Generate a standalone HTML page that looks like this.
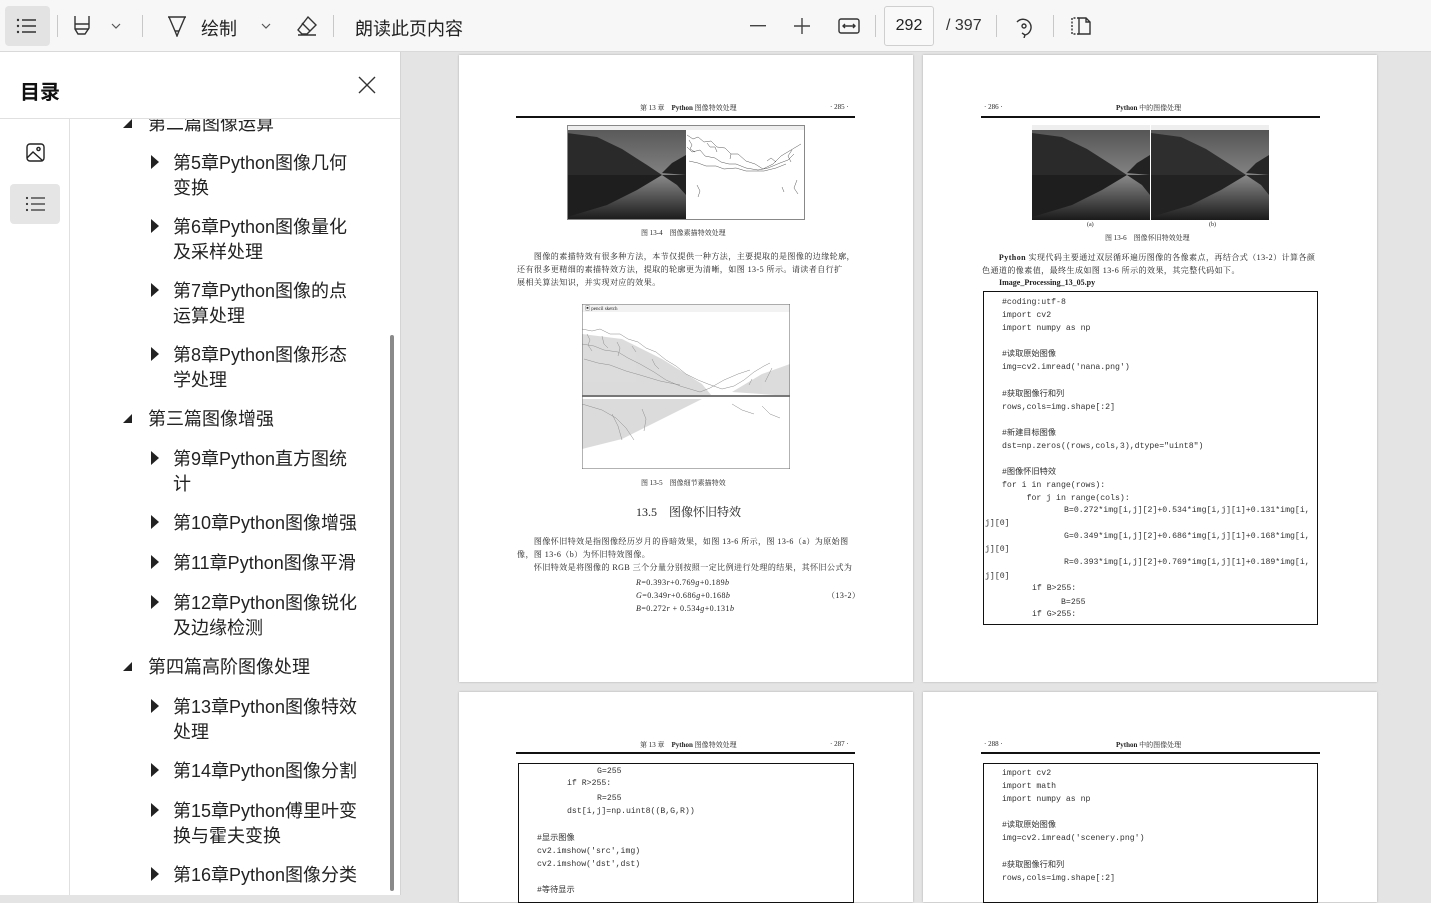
<!DOCTYPE html>
<html><head><meta charset="utf-8">
<style>
*{margin:0;padding:0;box-sizing:border-box}
body{width:1431px;height:895px;overflow:hidden;background:#e4e4e4;font-family:"Liberation Sans","Noto Sans CJK SC",sans-serif;position:relative}
.a{position:absolute;white-space:nowrap}
#tb{position:absolute;left:0;top:0;width:1431px;height:52px;background:#f7f7f7;border-bottom:1px solid #d9d9d9}
.sep{position:absolute;top:15px;width:1px;height:22px;background:#c8c8c8}
#sb{position:absolute;left:0;top:52px;width:401px;height:843px;background:#fff;border-right:1px solid #d4d4d4}
.toc{position:absolute;font-size:18px;color:#222;line-height:25px;font-family:"Liberation Sans","Noto Sans CJK SC",sans-serif}
.tri{position:absolute;width:0;height:0;border-top:7px solid transparent;border-bottom:7px solid transparent;border-left:8px solid #222}
.dtri{position:absolute;width:0;height:0;border-left:9px solid transparent;border-bottom:9px solid #222}
.pg{position:absolute;background:#fff;box-shadow:0 0 2px rgba(0,0,0,.25)}
.s{font-family:"Liberation Serif","Noto Serif CJK SC",serif;color:#222;position:absolute;white-space:nowrap}
.p{font-size:8px;letter-spacing:.45px;line-height:13px}
.m{font-family:"Liberation Mono","Noto Sans CJK SC",monospace;font-size:8.2px;color:#333;position:absolute;white-space:nowrap}
.box{position:absolute;border:1.3px solid #111}
</style></head><body>

<!-- toolbar -->
<div id="tb">
<div class="a" style="left:5px;top:6px;width:45px;height:40px;background:#e3e3e3;border-radius:4px"></div>
<svg class="a" style="left:16px;top:17px" width="22" height="18" viewBox="0 0 22 18"><g fill="#333"><circle cx="2" cy="3" r="1.2"/><circle cx="2" cy="9" r="1.2"/><circle cx="2" cy="15" r="1.2"/></g><g stroke="#333" stroke-width="1.4"><path d="M6 3h14M6 9h14M6 15h14"/></g></svg>
<div class="sep" style="left:57px"></div>
<svg class="a" style="left:72px;top:15px" width="20" height="22" viewBox="0 0 20 22" fill="none" stroke="#333" stroke-width="1.4"><path d="M3 1v8h14V1M3 9v5l3 5h7l4-6V9M3 14h14"/></svg>
<svg class="a" style="left:110px;top:22px" width="12" height="8" viewBox="0 0 12 8" fill="none" stroke="#555" stroke-width="1.2"><path d="M2 2l4 4 4-4"/></svg>
<div class="sep" style="left:142px"></div>
<svg class="a" style="left:166px;top:15px" width="22" height="22" viewBox="0 0 22 22" fill="none" stroke="#333" stroke-width="1.4"><path d="M2 2h18M3 2l6 14h4l6-14M9 16l2 5 2-5"/></svg>
<div class="a" style="left:201px;top:15px;font-size:18px;color:#222">绘制</div>
<svg class="a" style="left:260px;top:22px" width="12" height="8" viewBox="0 0 12 8" fill="none" stroke="#555" stroke-width="1.2"><path d="M2 2l4 4 4-4"/></svg>
<svg class="a" style="left:295px;top:15px" width="24" height="22" viewBox="0 0 24 22" fill="none" stroke="#333" stroke-width="1.4"><path d="M13 2l8 8-9 9H7l-4-4z M7 8l8 8 M3 20h18"/></svg>
<div class="sep" style="left:333px"></div>
<div class="a" style="left:355px;top:15px;font-size:18px;color:#222">朗读此页内容</div>
<svg class="a" style="left:750px;top:25px" width="16" height="2"><rect width="16" height="1.4" fill="#444"/></svg>
<svg class="a" style="left:794px;top:18px" width="16" height="16" viewBox="0 0 16 16" stroke="#444" stroke-width="1.4"><path d="M8 0v16M0 8h16"/></svg>
<svg class="a" style="left:838px;top:17px" width="22" height="18" viewBox="0 0 22 18" fill="none" stroke="#333" stroke-width="1.4"><rect x="1" y="2" width="20" height="14" rx="2"/><path d="M5 9h12M7 7l-2 2 2 2M15 7l2 2-2 2"/></svg>
<div class="sep" style="left:875px"></div>
<div class="a" style="left:884px;top:6px;width:50px;height:40px;border:1px solid #cfcfcf;border-radius:3px;background:#f9f9f9;font-size:16px;color:#222;text-align:center;line-height:38px">292</div>
<div class="a" style="left:946px;top:17px;font-size:16px;color:#333">/ 397</div>
<div class="sep" style="left:996px"></div>
<svg class="a" style="left:1012px;top:14px" width="24" height="24" viewBox="0 0 24 24" fill="none" stroke="#333" stroke-width="1.4"><path d="M5 8a8 8 0 1 1 8 13M13 21l-3-2M13 21l-1 3"/><circle cx="12" cy="12" r="2"/></svg>
<div class="sep" style="left:1053px"></div>
<svg class="a" style="left:1070px;top:17px" width="22" height="18" viewBox="0 0 22 18" fill="none" stroke="#333" stroke-width="1.4"><path d="M9 1H2v16h7" stroke-dasharray="2 1.5"/><path d="M9 1h7l4 4v12H9z M16 1v4h4"/></svg>
</div>

<!-- sidebar -->
<div id="sb">
<div class="a" style="left:20px;top:24px;font-size:20px;font-weight:bold;color:#111">目录</div>
<svg class="a" style="left:358px;top:24px" width="18" height="18" viewBox="0 0 18 18" stroke="#333" stroke-width="1.4"><path d="M1 1l16 16M17 1L1 17"/></svg>
<div class="a" style="left:0;top:66px;width:400px;height:1px;background:#e0e0e0"></div>
<div class="a" style="left:69px;top:67px;width:1px;height:776px;background:#e0e0e0"></div>
<svg class="a" style="left:26px;top:91px" width="19" height="19" viewBox="0 0 19 19" fill="none" stroke="#222" stroke-width="1.4"><rect x="1" y="1" width="17" height="17" rx="3"/><circle cx="12.5" cy="6" r="1.6"/><path d="M1 15l6-6 10 9"/></svg>
<div class="a" style="left:10px;top:132px;width:50px;height:40px;background:#e5e5e5;border-radius:4px"></div>
<svg class="a" style="left:25px;top:143px" width="22" height="18" viewBox="0 0 22 18"><g fill="#333"><circle cx="2" cy="3" r="1.1"/><circle cx="2" cy="9" r="1.1"/><circle cx="2" cy="15" r="1.1"/></g><g stroke="#333" stroke-width="1.3"><path d="M6 3h14M6 9h14M6 15h14"/></g></svg>
<div class="a" style="left:70px;top:67px;width:320px;height:776px;overflow:hidden">
 <div style="position:absolute;left:-70px;top:-117px;width:400px;height:900px">
  <div class="dtri" style="left:123px;top:117px"></div><div class="toc" style="left:148px;top:110px">第二篇图像运算</div>
  <div class="tri" style="left:151px;top:153px"></div><div class="toc" style="left:173px;top:149px">第5章Python图像几何<br>变换</div>
  <div class="tri" style="left:151px;top:217px"></div><div class="toc" style="left:173px;top:213px">第6章Python图像量化<br>及采样处理</div>
  <div class="tri" style="left:151px;top:281px"></div><div class="toc" style="left:173px;top:277px">第7章Python图像的点<br>运算处理</div>
  <div class="tri" style="left:151px;top:345px"></div><div class="toc" style="left:173px;top:341px">第8章Python图像形态<br>学处理</div>
  <div class="dtri" style="left:123px;top:412px"></div><div class="toc" style="left:148px;top:405px">第三篇图像增强</div>
  <div class="tri" style="left:151px;top:449px"></div><div class="toc" style="left:173px;top:445px">第9章Python直方图统<br>计</div>
  <div class="tri" style="left:151px;top:513px"></div><div class="toc" style="left:173px;top:509px">第10章Python图像增强</div>
  <div class="tri" style="left:151px;top:553px"></div><div class="toc" style="left:173px;top:549px">第11章Python图像平滑</div>
  <div class="tri" style="left:151px;top:593px"></div><div class="toc" style="left:173px;top:589px">第12章Python图像锐化<br>及边缘检测</div>
  <div class="dtri" style="left:123px;top:660px"></div><div class="toc" style="left:148px;top:653px">第四篇高阶图像处理</div>
  <div class="tri" style="left:151px;top:697px"></div><div class="toc" style="left:173px;top:693px">第13章Python图像特效<br>处理</div>
  <div class="tri" style="left:151px;top:761px"></div><div class="toc" style="left:173px;top:757px">第14章Python图像分割</div>
  <div class="tri" style="left:151px;top:801px"></div><div class="toc" style="left:173px;top:797px">第15章Python傅里叶变<br>换与霍夫变换</div>
  <div class="tri" style="left:151px;top:865px"></div><div class="toc" style="left:173px;top:861px">第16章Python图像分类</div>
 </div>
</div>
<div class="a" style="left:390px;top:283px;width:4px;height:556px;background:#8a8a8a;border-radius:2px"></div>
</div>

<!-- page 1 -->
<div class="pg" style="left:459px;top:55px;width:454px;height:627px"></div>
<div class="s" style="left:640px;top:103px;font-size:7px">第 13 章　<b>Python</b> 图像特效处理</div>
<div class="s" style="left:830px;top:103px;font-size:7px">· 285 ·</div>
<div class="a" style="left:516px;top:116px;width:339px;height:1.5px;background:#111"></div>
<svg class="a" style="left:567px;top:125px" width="238" height="95" viewBox="0 0 238 95">
<defs><linearGradient id="g1" x1="0" y1="0" x2="0" y2="1"><stop offset="0" stop-color="#555"/><stop offset="1" stop-color="#aaa"/></linearGradient>
<linearGradient id="w1" x1="0" y1="0" x2="0" y2="1"><stop offset="0" stop-color="#8a8a8a"/><stop offset="1" stop-color="#1a1a1a"/></linearGradient></defs>
<rect width="119" height="95" fill="url(#g1)"/><rect y="0" width="119" height="5" fill="#eee"/>
<rect y="50" width="119" height="45" fill="url(#w1)"/>
<polygon points="0,8 30,12 55,24 80,40 95,50 0,50" fill="#2a2a2a"/>
<polygon points="119,30 105,38 95,48 119,50" fill="#222"/>
<polygon points="0,50 95,50 70,65 40,80 0,92" fill="#1e1e1e"/>
<polygon points="119,50 95,50 110,60 119,70" fill="#222"/>
<rect x="119" width="119" height="95" fill="#fff"/><rect x="119" width="119" height="5" fill="#eee"/>
<g fill="none" stroke="#555" stroke-width=".5">
<path d="M120,10 l6,4 l5,-2 l6,5 l7,-1 l6,6 l8,1 l6,6 l7,0 l8,7 l9,3 l8,5 l10,-5 l8,-8 l10,-6 l10,-6"/>
<path d="M120,22 l5,5 l8,-2 l5,6 l10,2 l6,4 l8,2 l7,0 l10,4 l12,2 l10,-2 l12,-5 l8,-3 l6,-6"/>
<path d="M122,36 l9,2 l8,3 l10,0 l8,3 l12,-1 l10,3 l18,0 l12,-3 l10,-4"/>
<path d="M122,15 l3,5 l-2,4 l5,3 M140,18 l3,4 l5,0 l2,5 M160,25 l4,4 l-1,5 M200,36 l4,-3 l5,4 M225,25 l-4,6 l3,6 M130,60 l3,6 l-2,6 M230,55 l-3,8 l4,6 M215,62 l2,5"/>
</g></svg>
<div class="a" style="left:567px;top:125px;width:238px;height:95px;border:1px solid #888"></div>
<div class="s" style="left:641px;top:228px;font-size:7px">图 13-4　图像素描特效处理</div>
<div class="s p" style="left:517px;top:250px">　　图像的素描特效有很多种方法，本节仅提供一种方法，主要提取的是图像的边缘轮廓，<br>还有很多更精细的素描特效方法，提取的轮廓更为清晰，如图 13-5 所示。请读者自行扩<br>展相关算法知识，并实现对应的效果。</div>
<svg class="a" style="left:582px;top:304px" width="208" height="165" viewBox="0 0 208 165">
<rect width="208" height="165" fill="#fff"/><rect width="208" height="8" fill="#f2f2f2"/>
<g fill="none" stroke="#888" stroke-width=".5">
<path d="M0,25 l10,2 l8,-2 l10,5 l10,0 l8,5 l10,3 l8,6 l10,4 l10,8 l10,6 l10,8 l12,6 l10,4 l14,5 l12,-3 l10,-6 l10,-8 l10,-6 l6,-3"/>
<path d="M0,40 l12,2 l10,4 l14,2 l10,6 l12,6 l14,8 l12,8 l14,6 l20,6 l10,-4 l14,-8 l14,-6 l12,-4"/>
<path d="M2,55 l14,4 l12,2 l16,6 l14,4 l20,6 l20,4"/>
<path d="M0,100 l20,6 l14,8 l10,10 l8,12 M30,110 l6,12 l4,14 M60,105 l4,10 l-2,12 M150,100 l10,6 l12,4 M180,102 l8,8 l10,4"/>
<path d="M5,30 l3,6 l-2,5 l4,6 M20,32 l2,8 l4,4 M35,38 l3,6 l-2,8 M50,42 l4,6 M70,55 l3,6 l4,4 M190,64 l-4,8 l-3,6 M170,75 l-3,6"/>
</g>
<g fill="#9a9a9a" opacity=".35"><polygon points="0,30 40,35 80,55 120,80 130,92 0,92"/><polygon points="208,60 180,70 150,88 208,92"/><polygon points="0,95 120,95 80,115 40,135 0,145"/></g>
<rect y="91" width="208" height="2" fill="#777"/>
<rect width="208" height="165" fill="none" stroke="#666" stroke-width="1"/>
</svg>
<div class="s" style="left:585px;top:305px;font-size:5px">▣ pencil sketch</div>
<div class="s" style="left:641px;top:478px;font-size:7px">图 13-5　图像细节素描特效</div>
<div class="s" style="left:636px;top:503px;font-size:12px">13.5　图像怀旧特效</div>
<div class="s p" style="left:517px;top:535px">　　图像怀旧特效是指图像经历岁月的昏暗效果，如图 13-6 所示，图 13-6（a）为原始图<br>像，图 13-6（b）为怀旧特效图像。<br>　　怀旧特效是将图像的 RGB 三个分量分别按照一定比例进行处理的结果，其怀旧公式为</div>
<div class="s p" style="left:636px;top:576px"><i>R</i>=0.393<i>r</i>+0.769<i>g</i>+0.189<i>b</i><br><i>G</i>=0.349<i>r</i>+0.686<i>g</i>+0.168<i>b</i><br><i>B</i>=0.272<i>r</i> + 0.534<i>g</i>+0.131<i>b</i></div>
<div class="s p" style="left:827px;top:589px">（13-2）</div>

<!-- page 2 -->
<div class="pg" style="left:923px;top:55px;width:454px;height:627px"></div>
<div class="s" style="left:984px;top:103px;font-size:7px">· 286 ·</div>
<div class="s" style="left:1116px;top:103px;font-size:7px"><b>Python</b> 中的图像处理</div>
<div class="a" style="left:981px;top:116px;width:339px;height:1.5px;background:#111"></div>
<svg class="a" style="left:1032px;top:125px" width="237" height="95" viewBox="0 0 237 95">
<defs><linearGradient id="g2" x1="0" y1="0" x2="0" y2="1"><stop offset="0" stop-color="#505050"/><stop offset="1" stop-color="#b0b0b0"/></linearGradient>
<linearGradient id="w2" x1="0" y1="0" x2="0" y2="1"><stop offset="0" stop-color="#8a8a8a"/><stop offset="1" stop-color="#1a1a1a"/></linearGradient></defs>
<g id="l2"><rect width="118" height="95" fill="url(#g2)"/><rect width="118" height="5" fill="#eee"/>
<rect y="50" width="118" height="45" fill="url(#w2)"/>
<polygon points="0,8 30,12 55,24 80,40 95,50 0,50" fill="#2a2a2a"/>
<polygon points="118,30 105,38 95,48 118,50" fill="#222"/>
<polygon points="0,50 95,50 70,65 40,80 0,92" fill="#1e1e1e"/>
<polygon points="118,50 95,50 110,60 118,70" fill="#222"/></g>
<g transform="translate(119,0)"><rect width="118" height="95" fill="url(#g2)"/><rect width="118" height="5" fill="#eee"/>
<rect y="50" width="118" height="45" fill="url(#w2)"/>
<polygon points="0,8 30,12 55,24 80,40 95,50 0,50" fill="#2e2e2e"/>
<polygon points="118,30 105,38 95,48 118,50" fill="#262626"/>
<polygon points="0,50 95,50 70,65 40,80 0,92" fill="#222"/>
<polygon points="118,50 95,50 110,60 118,70" fill="#262626"/></g>
</svg>
<div class="s" style="left:1087px;top:222px;font-size:6px">(a)</div>
<div class="s" style="left:1209px;top:222px;font-size:6px">(b)</div>
<div class="s" style="left:1105px;top:233px;font-size:7px">图 13-6　图像怀旧特效处理</div>
<div class="s p" style="left:982px;top:251px">　　<b>Python</b> 实现代码主要通过双层循环遍历图像的各像素点，再结合式（13-2）计算各颜<br>色通道的像素值，最终生成如图 13-6 所示的效果，其完整代码如下。</div>
<div class="s" style="left:999px;top:278px;font-size:8px;font-weight:bold">Image_Processing_13_05.py</div>
<div class="box" style="left:983px;top:291px;width:335px;height:334px"></div>
<div class="m" style="left:1002px;top:296px;line-height:13.1px">#coding:utf-8<br>import cv2<br>import numpy as np<br><br>#读取原始图像<br>img=cv2.imread('nana.png')<br><br>#获取图像行和列<br>rows,cols=img.shape[:2]<br><br>#新建目标图像<br>dst=np.zeros((rows,cols,3),dtype="uint8")<br><br>#图像怀旧特效<br>for i in range(rows):<br>&nbsp;&nbsp;&nbsp;&nbsp;&nbsp;for j in range(cols):</div>
<div class="m" style="left:1064px;top:506px">B=0.272*img[i,j][2]+0.534*img[i,j][1]+0.131*img[i,</div>
<div class="m" style="left:985px;top:519px">j][0]</div>
<div class="m" style="left:1064px;top:532px">G=0.349*img[i,j][2]+0.686*img[i,j][1]+0.168*img[i,</div>
<div class="m" style="left:985px;top:545px">j][0]</div>
<div class="m" style="left:1064px;top:558px">R=0.393*img[i,j][2]+0.769*img[i,j][1]+0.189*img[i,</div>
<div class="m" style="left:985px;top:572px">j][0]</div>
<div class="m" style="left:1032px;top:584px">if B&gt;255:</div>
<div class="m" style="left:1061px;top:598px">B=255</div>
<div class="m" style="left:1032px;top:610px">if G&gt;255:</div>

<!-- page 3 -->
<div class="pg" style="left:459px;top:692px;width:454px;height:210px"></div>
<div class="s" style="left:640px;top:740px;font-size:7px">第 13 章　<b>Python</b> 图像特效处理</div>
<div class="s" style="left:830px;top:740px;font-size:7px">· 287 ·</div>
<div class="a" style="left:516px;top:752px;width:339px;height:1.5px;background:#111"></div>
<div class="box" style="left:518px;top:763px;width:336px;height:140px"></div>
<div class="m" style="left:597px;top:767px">G=255</div>
<div class="m" style="left:567px;top:779px">if R&gt;255:</div>
<div class="m" style="left:597px;top:794px">R=255</div>
<div class="m" style="left:567px;top:807px">dst[i,j]=np.uint8((B,G,R))</div>
<div class="m" style="left:537px;top:832px;line-height:13px">#显示图像<br>cv2.imshow('src',img)<br>cv2.imshow('dst',dst)<br><br>#等待显示</div>

<!-- page 4 -->
<div class="pg" style="left:923px;top:692px;width:454px;height:210px"></div>
<div class="s" style="left:984px;top:740px;font-size:7px">· 288 ·</div>
<div class="s" style="left:1116px;top:740px;font-size:7px"><b>Python</b> 中的图像处理</div>
<div class="a" style="left:981px;top:752px;width:339px;height:1.5px;background:#111"></div>
<div class="box" style="left:983px;top:763px;width:335px;height:140px"></div>
<div class="m" style="left:1002px;top:767px;line-height:13.1px">import cv2<br>import math<br>import numpy as np<br><br>#读取原始图像<br>img=cv2.imread('scenery.png')<br><br>#获取图像行和列<br>rows,cols=img.shape[:2]</div>
</body></html>
